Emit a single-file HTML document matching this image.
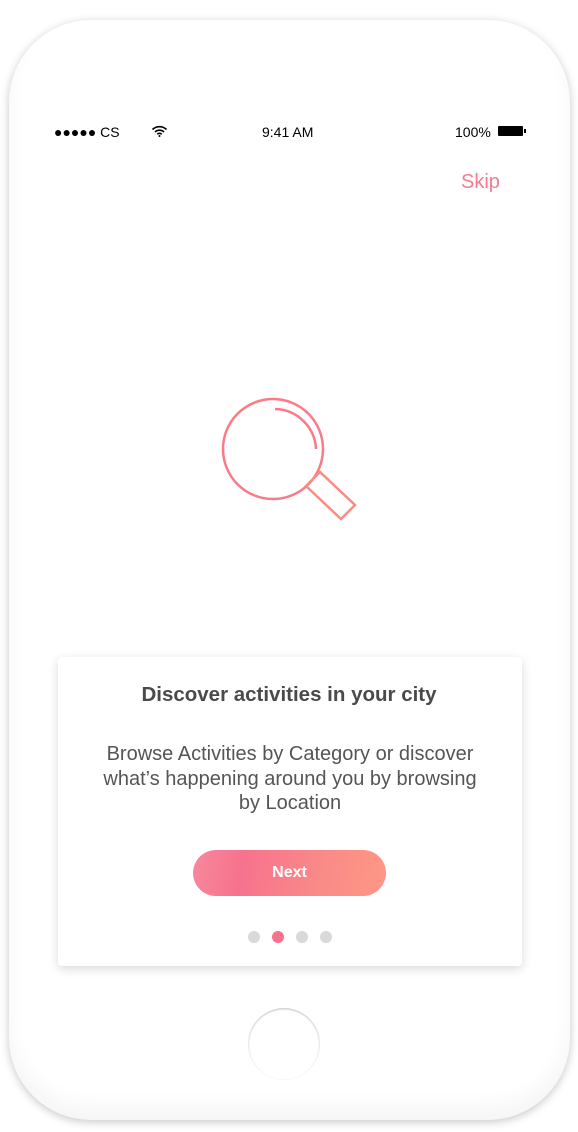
<!DOCTYPE html>
<html><head><style>
body{margin:0;width:578px;height:1132px;background:#fff;position:relative;overflow:hidden;font-family:"Liberation Sans",sans-serif}
.phone{position:absolute;left:9px;top:20px;width:561px;height:1100px;border-radius:82px;background:#fff;box-shadow:0 2px 9px rgba(0,0,0,.22),inset 0 -14px 20px rgba(0,0,0,.04)}
.sb{position:absolute;top:124px;font-size:14px;color:#000}
.card{position:absolute;left:58px;top:657px;width:464px;height:309px;background:#fff;border-radius:4px;box-shadow:0 3px 10px rgba(0,0,0,.15)}
h1{position:absolute;top:683px;left:0;width:578px;text-align:center;font-size:20.5px;font-weight:bold;color:#4a4a4a;margin:0}
p{position:absolute;top:742px;left:92px;width:396px;text-align:center;font-size:20px;line-height:24.5px;color:#555;margin:0}
.btn{position:absolute;left:193px;top:850px;width:193px;height:46px;border-radius:23px;background:linear-gradient(100deg,#f7899d 0%,#f7728d 25%,#f98a88 65%,#fe9885 100%);color:#fff;font-size:16px;font-weight:bold;text-align:center;line-height:46px}
.dot{position:absolute;top:931px;width:12px;height:12px;border-radius:50%;background:#d9d9d9}
.home{position:absolute;left:248px;top:1008px;width:72px;height:72px;border-radius:50%;box-shadow:inset 0 1px 2px rgba(0,0,0,.25)}
</style></head><body>
<div class="phone"></div>
<div class="sb" style="left:54px">●●●●● CS</div>
<svg style="position:absolute;left:151px;top:125px" width="17" height="12" viewBox="0 0 17 12"><path d="M1.5 4.5a10 10 0 0 1 14 0M4 7a6.5 6.5 0 0 1 9 0M6.3 9.3a3 3 0 0 1 4.4 0" stroke="#000" stroke-width="1.6" fill="none"/><circle cx="8.5" cy="11" r="1" fill="#000"/></svg>
<div class="sb" style="left:262px">9:41 AM</div>
<div class="sb" style="left:455px">100%</div>
<div style="position:absolute;left:498px;top:126px;width:25px;height:10px;background:#000;border-radius:1px"></div>
<div style="position:absolute;left:524px;top:129px;width:2px;height:4px;background:#000"></div>
<div style="position:absolute;left:461px;top:171px;font-size:20px;color:#f9798e">Skip</div>
<svg style="position:absolute;left:0;top:0" width="578" height="600"><g fill="none" stroke="#fb7a88" stroke-width="2.5"><circle cx="273" cy="449" r="50"/><path d="M275 409A42 42 0 0 1 316 449"/><path d="M306 486L320 472L355 505L341 519Z" stroke="#fb8c84"/></g></svg>
<div class="card"></div>
<h1>Discover activities in your city</h1>
<p>Browse Activities by Category or discover what’s happening around you by browsing by Location</p>
<div class="btn">Next</div>
<div class="dot" style="left:248px"></div><div class="dot" style="left:272px;background:#f7728d"></div><div class="dot" style="left:296px"></div><div class="dot" style="left:320px"></div>
<div class="home"></div>
</body></html>
